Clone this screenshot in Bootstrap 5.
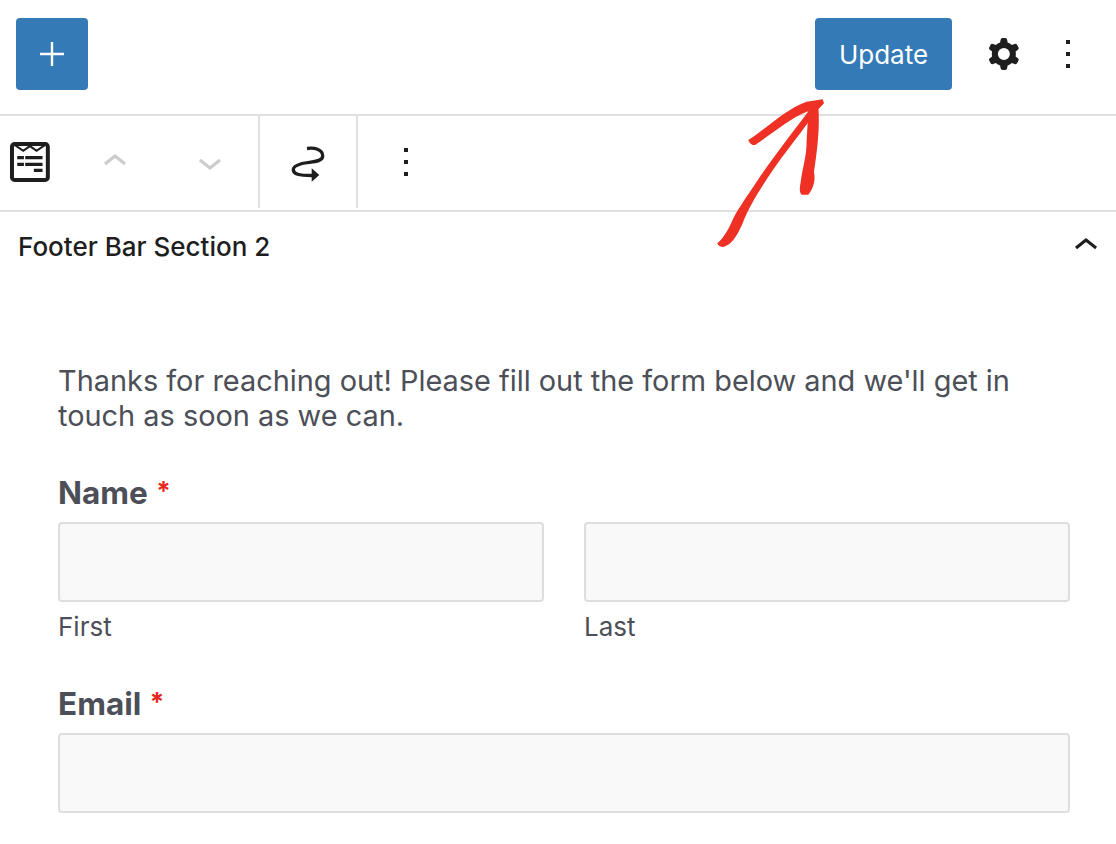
<!DOCTYPE html>
<html lang="en">
<head>
<meta charset="utf-8">
<title>Footer Bar Section 2</title>
<link rel="stylesheet" href="https://cdn.jsdelivr.net/npm/bootstrap@5.3.0/dist/css/bootstrap.min.css">
<style>
html, body { height: 844px; overflow: hidden; }
body { font-family: Inter, "Liberation Sans", sans-serif; background: #fff; color: #1e1e1e; position: relative; }
.ed-top { height: 116px; border-bottom: 2px solid #e0e0e0; padding: 18px 24px 0 16px; }
.ed-blue { background: #337ab7; color: #fff; border: 0; border-radius: 4px; height: 72px; }
.ed-blue:hover { background: #337ab7; color: #fff; }
.ed-add { width: 72px; padding: 0; }
.ed-update { width: 137px; padding: 0; font-size: 26px; margin-right: 28px; }
.ed-gear { margin-right: 16px; }
.ed-tools { height: 96px; border-bottom: 2px solid #e0e0e0; }
.ed-group { height: 92px; border-right: 2px solid #e0e0e0; }
.ed-g1 { width: 260px; padding-left: 6px; }
.ed-g2 { width: 98px; padding-left: 24px; }
.ed-g3 { padding-left: 24px; height: 92px; }
.ed-updown { width: 96px; }
.ed-up { margin-left: 13px; }
.ed-panel { height: 68px; padding: 0 6px 0 18px; font-size: 26px; font-weight: 500; }
.ed-form { padding: 83px 46px 0 58px; color: #4c4f57; }
.ed-intro { font-size: 28.9px; line-height: 35px; margin: 0 0 40px; }
.ed-label { font-size: 31.5px; font-weight: 700; line-height: 36px; margin-bottom: 11px; display: block; }
.ed-label i { color: #e4281c; font-style: normal; font-weight: 700; font-size: 26px; vertical-align: 4px; margin-left: 1px; }
.ed-input { height: 80px; background: #f9f9f9; border: 2px solid #dedede; border-radius: 4px; }
.ed-input:focus { background: #f9f9f9; border-color: #dedede; box-shadow: none; }
.ed-cols { gap: 40px; margin-bottom: 42px; }
.ed-sub { font-size: 26px; line-height: 30px; margin-top: 10px; display: block; }
.ed-col { width: 486px; }
.ed-arrow { position: absolute; left: 690px; top: 0; width: 426px; height: 270px; pointer-events: none; }
svg { display: block; }
</style>
</head>
<body>
<header class="ed-top d-flex align-items-start">
  <button class="btn ed-blue ed-add d-flex align-items-center justify-content-center" aria-label="Add block">
    <svg width="48" height="48" viewBox="0 0 24 24" fill="#fff"><path d="M18 11.4h-5.400V6h-1.200v5.400H6v1.200h5.400V18h1.200v-5.400H18z"/></svg>
  </button>
  <div class="ms-auto d-flex align-items-center">
    <button class="btn ed-blue ed-update">Update</button>
    <svg class="ed-gear" width="48" height="48" viewBox="0 0 24 24" fill="#1e1e1e"><path fill-rule="evenodd" clip-rule="evenodd" d="M10.289 4.836A1 1 0 0111.275 4h1.306a1 1 0 01.987.836l.244 1.466c.787.26 1.503.679 2.108 1.218l1.393-.522a1 1 0 011.216.437l.653 1.13a1 1 0 01-.23 1.273l-1.148.944a6.025 6.025 0 010 2.435l1.149.946a1 1 0 01.23 1.272l-.653 1.13a1 1 0 01-1.216.437l-1.394-.522c-.605.54-1.32.958-2.108 1.218l-.244 1.466a1 1 0 01-.987.836h-1.306a1 1 0 01-.986-.836l-.244-1.466a5.995 5.995 0 01-2.108-1.218l-1.394.522a1 1 0 01-1.217-.436l-.653-1.131a1 1 0 01.23-1.272l1.149-.946a6.026 6.026 0 010-2.435l-1.148-.944a1 1 0 01-.23-1.272l.653-1.131a1 1 0 011.217-.437l1.393.522a5.994 5.994 0 012.108-1.218l.244-1.466zM14.929 12a3 3 0 11-6 0 3 3 0 016 0z"/></svg>
    <svg width="48" height="48" viewBox="0 0 24 24" fill="#1e1e1e"><path d="M13 19h-2v-2h2v2zm0-6h-2v-2h2v2zm0-6h-2V5h2v2z"/></svg>
  </div>
</header>

<div class="ed-tools d-flex align-items-start">
  <div class="ed-group ed-g1 d-flex align-items-center">
    <svg width="48" height="48" viewBox="0 0 48 48" fill="none">
      <rect x="6" y="6" width="36" height="36" rx="2.500" stroke="#1e1e1e" stroke-width="4"/>
      <path d="M9 7L17.300 12.700L24 8L30.700 12.700L39 7" stroke="#1e1e1e" stroke-width="2"/>
      <path d="M11.300 18H18V21.300H11.300ZM19.300 18H36.700V21.300H19.300ZM11.300 24.700H18V28H11.300ZM19.300 24.700H36.700V28H19.300ZM28 30.700H36.700V34H28Z" fill="#1e1e1e"/>
    </svg>
    <div class="ed-updown d-flex justify-content-center ed-up">
      <svg width="48" height="48" viewBox="0 0 24 24" fill="#cccccc"><path d="M6.500 12.400L12 8l5.500 4.400-.9 1.200L12 10l-4.500 3.600-1-1.200z"/></svg>
    </div>
    <div class="ed-updown d-flex justify-content-center">
      <svg width="48" height="48" viewBox="0 0 24 24" fill="#cccccc"><path d="M17.500 11.600L12 16l-5.500-4.400.9-1.200L12 14l4.500-3.600 1 1.200z"/></svg>
    </div>
  </div>
  <div class="ed-group ed-g2 d-flex align-items-center">
    <svg width="48" height="48" viewBox="0 0 48 48" fill="none">
      <path d="M23 10.500C30 9.500 38.700 11 38.700 18C38.700 24.500 26 23.500 18 25.500C11 27.500 9 30 9.300 32C9.800 36 14 37.500 28 37.500" stroke="#1e1e1e" stroke-width="3.300" stroke-linecap="butt"/>
      <path d="M27.700 30.300L35.300 37L27.700 43.700Z" fill="#1e1e1e"/>
    </svg>
  </div>
  <div class="ed-g3 d-flex align-items-center">
    <svg width="48" height="48" viewBox="0 0 24 24" fill="#1e1e1e"><path d="M13 19h-2v-2h2v2zm0-6h-2v-2h2v2zm0-6h-2V5h2v2z"/></svg>
  </div>
</div>

<div class="ed-panel d-flex align-items-center justify-content-between">
  <span>Footer Bar Section 2</span>
  <svg width="48" height="48" viewBox="0 0 24 24" fill="#1e1e1e"><path d="M6.500 12.400L12 8l5.500 4.400-.9 1.200L12 10l-4.500 3.600-1-1.200z"/></svg>
</div>

<form class="ed-form">
  <p class="ed-intro">Thanks for reaching out! Please fill out the form below and we'll get in touch as soon as we can.</p>
  <label class="ed-label">Name <i>*</i></label>
  <div class="d-flex ed-cols">
    <div class="ed-col"><input class="form-control ed-input" type="text" aria-label="First"><span class="ed-sub">First</span></div>
    <div class="ed-col"><input class="form-control ed-input" type="text" aria-label="Last"><span class="ed-sub">Last</span></div>
  </div>
  <label class="ed-label">Email <i>*</i></label>
  <input class="form-control ed-input" type="email" aria-label="Email">
</form>

<svg class="ed-arrow" viewBox="0 0 1278 810" fill="#ee3124">
  <path d="M82 730C100 715 115 690 130 655C145 625 170 590 200 545C250 470 310 395 358 330L385 325C345 385 285 455 232 535C200 585 175 625 158 670C140 710 125 735 100 741C92 741 84 738 82 730Z"/>
  <path d="M175 420C230 385 290 325 350 305L398 298L402 310L385 328L350 335C300 355 250 398 195 435C185 437 178 428 175 420Z"/>
  <path d="M355 335L385 320C390 380 382 450 372 515C378 545 367 570 355 584L335 584C326 575 330 560 333 540C338 500 350 470 350 420Z"/>
</svg>
</body>
</html>
